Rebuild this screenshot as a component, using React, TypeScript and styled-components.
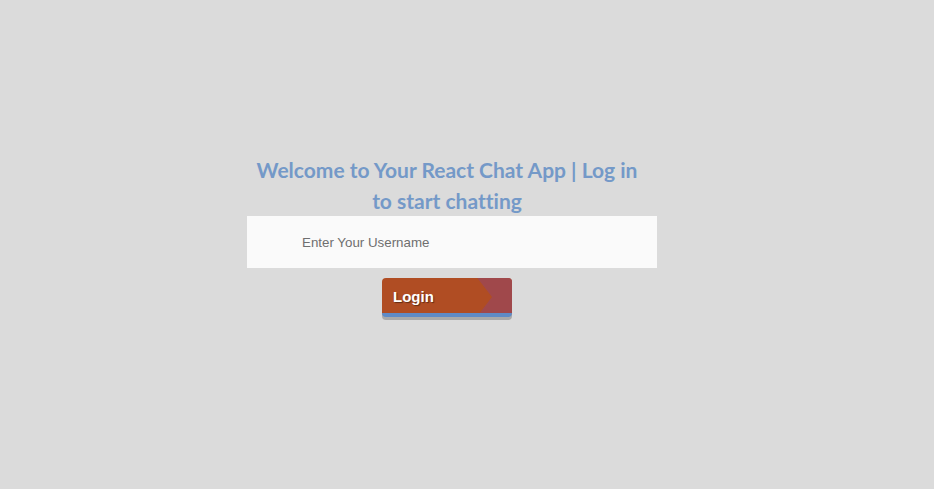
import styled, { createGlobalStyle } from "styled-components";

const Global = createGlobalStyle`
  html, body {
    margin: 0;
    padding: 0;
    background: #dbdbdb;
  }
`;

const Page = styled.div`
  height: 489px;
  display: flex;
  align-items: center;
  justify-content: center;
`;

const Panel = styled.div`
  width: 410px;
  margin: -20px 30px 0 0;
  display: flex;
  flex-direction: column;
  align-items: center;
`;

const Title = styled.h2`
  margin: 0 0 0 -10px;
  padding-top: 1px;
  width: 400px;
  text-align: center;
  font-family: Lato, "Noto Sans", sans-serif;
  font-weight: 700;
  font-size: 21px;
  line-height: 31px;
  font-variant-ligatures: none;
  color: #7499c8;
`;

const UsernameInput = styled.input`
  box-sizing: border-box;
  width: 410px;
  height: 52px;
  border: none;
  outline: none;
  background: #fafafa;
  padding: 2px 0 0 55px;
  font-family: "Liberation Sans", Arial, sans-serif;
  font-size: 13.333px;
  color: #444;

  &::placeholder {
    color: #6f6f6f;
  }
`;

const LoginButton = styled.button`
  position: relative;
  overflow: hidden;
  box-sizing: border-box;
  margin: 10px 0 0 -10px;
  width: 130px;
  height: 39px;
  padding: 2px 0 0 11px;
  border: none;
  border-bottom: 4px solid #5f8bc6;
  border-radius: 4px;
  background: #b04d23;
  box-shadow: 0 3px 0 #a9a9a9;
  text-align: left;
  font-family: "Liberation Sans", Arial, sans-serif;
  font-weight: 700;
  font-size: 15px;
  color: #fff;
  text-shadow: 1px 1px 1px rgba(0, 0, 0, 0.45);
  cursor: pointer;

  &::after {
    content: "";
    position: absolute;
    top: 0;
    right: 0;
    bottom: -4px;
    width: 35px;
    background: rgba(158, 72, 80, 0.9);
    clip-path: polygon(0 0, 100% 0, 100% 100%, 0 100%, 15px 50%);
  }
`;

const Label = styled.span`
  position: relative;
  z-index: 1;
`;

export default function App() {
  return (
    <Page>
      <Global />
      <Panel>
        <Title>Welcome to Your React Chat App | Log in to start chatting</Title>
        <UsernameInput placeholder="Enter Your Username" />
        <LoginButton>
          <Label>Login</Label>
        </LoginButton>
      </Panel>
    </Page>
  );
}
